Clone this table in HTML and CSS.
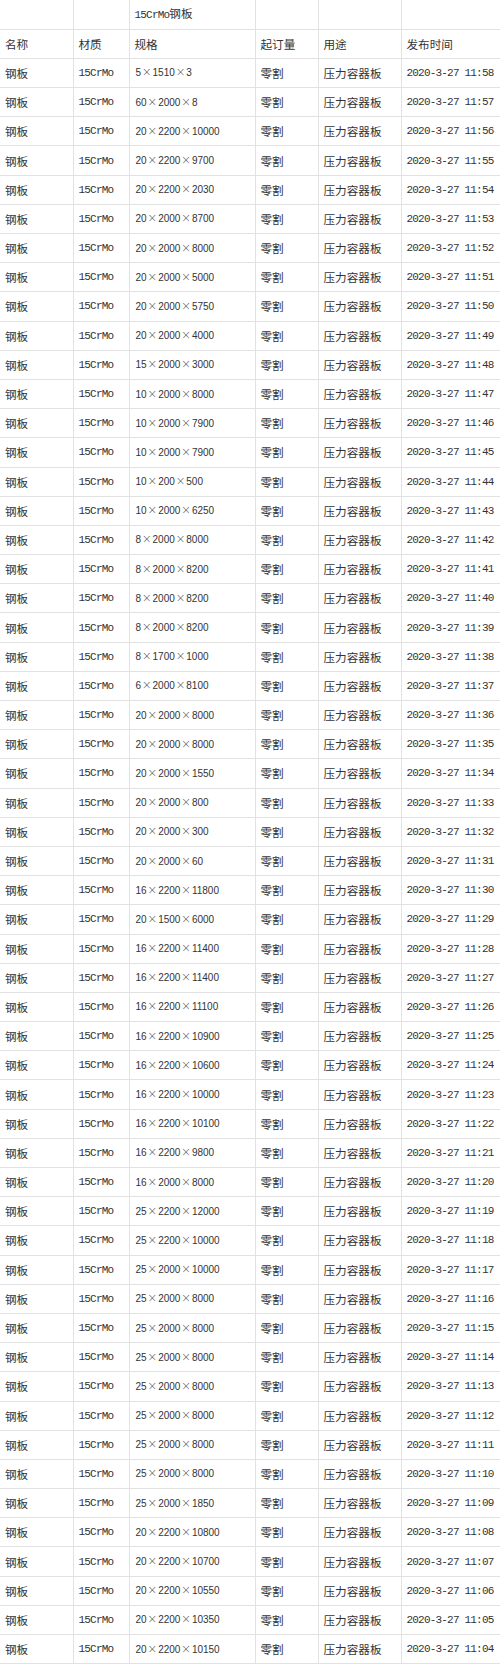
FILE: index.html
```html
<!DOCTYPE html>
<html lang="zh">
<head>
<meta charset="utf-8">
<title>15CrMo钢板</title>
<link rel="stylesheet" href="styles.css">
</head>
<body>
<table class="sheet">
<colgroup>
<col class="c1"><col class="c2"><col class="c3"><col class="c4"><col class="c5"><col class="c6">
</colgroup>
<tbody id="rows">
<tr><td></td><td></td><td class="mono">15CrMo<span class="cjk">钢板</span></td><td></td><td></td><td></td></tr>
<tr><td>名称</td><td>材质</td><td>规格</td><td>起订量</td><td>用途</td><td>发布时间</td></tr>
</tbody>
</table>
<script src="app.js"></script>
</body>
</html>
```
FILE: app.js
```js
var specs = [
"5×1510×3","60×2000×8","20×2200×10000","20×2200×9700","20×2200×2030","20×2000×8700",
"20×2000×8000","20×2000×5000","20×2000×5750","20×2000×4000","15×2000×3000","10×2000×8000",
"10×2000×7900","10×2000×7900","10×200×500","10×2000×6250","8×2000×8000","8×2000×8200",
"8×2000×8200","8×2000×8200","8×1700×1000","6×2000×8100","20×2000×8000","20×2000×8000",
"20×2000×1550","20×2000×800","20×2000×300","20×2000×60","16×2200×11800","20×1500×6000",
"16×2200×11400","16×2200×11400","16×2200×11100","16×2200×10900","16×2200×10600","16×2200×10000",
"16×2200×10100","16×2200×9800","16×2000×8000","25×2200×12000","25×2200×10000","25×2000×10000",
"25×2000×8000","25×2000×8000","25×2000×8000","25×2000×8000","25×2000×8000","25×2000×8000",
"25×2000×8000","25×2000×1850","20×2200×10800","20×2200×10700","20×2200×10550","20×2200×10350",
"20×2200×10150"
];
var tbody = document.getElementById("rows");
var html = "";
for (var i = 0; i < specs.length; i++) {
  var m = 58 - i;
  var spec = specs[i].split("×").join('<span class="x">×</span>');
  html += '<tr><td>钢板</td><td class="mono">15CrMo</td><td class="spec">' + spec +
    '</td><td>零割</td><td>压力容器板</td><td class="mono">2020-3-27 11:' + (m < 10 ? "0" + m : m) + '</td></tr>';
}
tbody.insertAdjacentHTML("beforeend", html);
```
FILE: styles.css
```css
html, body {
  margin: 0;
  padding: 0;
  background: #ffffff;
  overflow: hidden;
}
body {
  width: 500px;
  font-family: "Noto Sans CJK SC", "Noto Sans", sans-serif;
  color: #333333;
}
.sheet {
  border-collapse: collapse;
  table-layout: fixed;
  width: 510px;
}
.c1 { width: 73px; }
.c2 { width: 56px; }
.c3 { width: 126px; }
.c4 { width: 63px; }
.c5 { width: 83px; }
.c6 { width: 109px; }
.sheet tr {
  height: 29.2px;
}
.sheet td {
  border: 1px solid #e2e2e2;
  padding: 0 0 0 5px;
  font-size: 11.6px;
  line-height: 14px;
  white-space: nowrap;
  overflow: hidden;
  vertical-align: middle;
}
.sheet tr:first-child td { border-top: none; }
.sheet td:first-child { border-left: none; }
.sheet td.mono {
  font-family: "Liberation Mono", monospace;
  font-size: 11px;
  letter-spacing: -0.8px;
}
.sheet td.mono .cjk {
  font-family: "Noto Sans CJK SC", sans-serif;
  font-size: 11.6px;
  letter-spacing: 0;
}
.sheet td.spec {
  padding-left: 6px;
  font-family: "Liberation Sans", "Noto Sans", sans-serif;
  font-size: 10px;
}
.sheet td.spec .x {
  display: inline-block;
  width: 11.5px;
  text-align: center;
  font-family: "DejaVu Sans", sans-serif;
  font-size: 12px;
  font-weight: 200;
  color: #555555;
}
```
